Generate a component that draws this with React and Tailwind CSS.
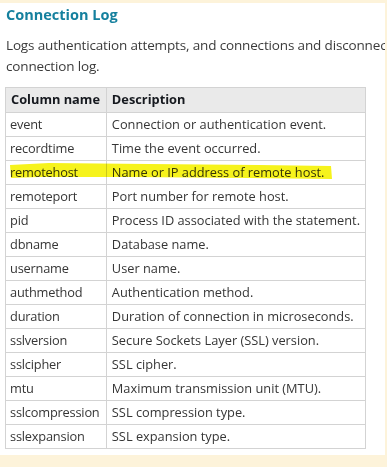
const rows = [
  ['event', 'Connection or authentication event.'],
  ['recordtime', 'Time the event occurred.'],
  ['remotehost', 'Name or IP address of remote host.'],
  ['remoteport', 'Port number for remote host.'],
  ['pid', 'Process ID associated with the statement.'],
  ['dbname', 'Database name.'],
  ['username', 'User name.'],
  ['authmethod', 'Authentication method.'],
  ['duration', 'Duration of connection in microseconds.'],
  ['sslversion', 'Secure Sockets Layer (SSL) version.'],
  ['sslcipher', 'SSL cipher.'],
  ['mtu', 'Maximum transmission unit (MTU).'],
  ['sslcompression', 'SSL compression type.'],
  ['sslexpansion', 'SSL expansion type.'],
];

export default function App() {
  return (
    <div className="w-[387px] h-[467px] bg-[#fdf3da] pt-[3px] overflow-hidden" style={{ fontFamily: '"Open Sans", sans-serif' }}>
      <div className="w-[385px] h-[452px] bg-white overflow-hidden pl-[6px]">
        <h3 className="text-[14.5px] font-bold text-[#15809e] leading-[20px] pt-[2px] whitespace-nowrap">Connection Log</h3>

        <p className="text-[13.5px] text-[#3b3b3b] leading-[21px] mt-[10px] w-[420px] tracking-[-0.15px]">
          Logs authentication attempts, and connections and disconnections.<br />
          connection log.
        </p>

        <div className="relative mt-[10px] ml-[-1px] w-[361px]">
          <table className="w-full border-collapse text-[12.8px] text-[#363636]">
            <thead>
              <tr className="bg-[#eaeaea] h-[25px]">
                <th className="border border-[#d3d3d3] text-left font-bold text-[#16191f] px-[5px] w-[101px] whitespace-nowrap">Column name</th>
                <th className="border border-[#d3d3d3] text-left font-bold text-[#16191f] px-[5px]">Description</th>
              </tr>
            </thead>
            <tbody>
              {rows.map(([name, desc]) => (
                <tr key={name} className="h-[24px]">
                  <td className="border border-[#d3d3d3] px-[4px] whitespace-nowrap tracking-[-0.2px]">{name}</td>
                  <td className="border border-[#d3d3d3] px-[5px] whitespace-nowrap">{desc}</td>
                </tr>
              ))}
            </tbody>
          </table>

          <svg className="absolute left-[4px] top-[75px] pointer-events-none mix-blend-multiply" width="324" height="18" viewBox="0 0 324 18">
            <path d="M1 3 L40 1 L140 2 L250 3 L322 4 L323 17 L240 16 L120 15 L30 15 L2 16 Z" fill="#f6f31c" />
          </svg>
        </div>
      </div>
    </div>
  );
}
